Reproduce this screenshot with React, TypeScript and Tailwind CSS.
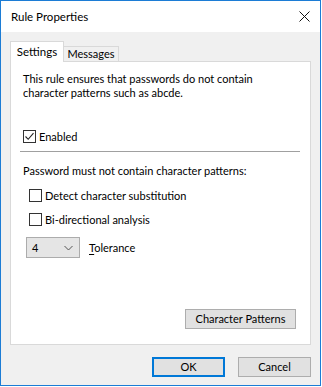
import React from "react";

function CheckBox({ checked }: { checked?: boolean }) {
  return (
    <div className="w-[13px] h-[13px] border border-[#333333] bg-white flex items-center justify-center shrink-0">
      {checked && (
        <svg width="11" height="11" viewBox="0 0 11 11">
          <path d="M1.5 5.5 L4.2 8.3 L9.5 2.2" fill="none" stroke="#222" strokeWidth="1.1" />
        </svg>
      )}
    </div>
  );
}

export default function App() {
  return (
    <div className="w-[322px] h-[387px] bg-white" style={{ fontFamily: "Lato, 'Liberation Sans', sans-serif" }}>
      <div className="w-[321px] h-[386px] border border-[#1c7cd5] bg-[#f0f0f0] flex flex-col text-[11px] leading-[14px] text-black">
        <div className="h-[31px] shrink-0 bg-white flex items-center justify-between pl-[10px] pr-[10px]">
          <span className="text-[11.5px]">Rule Properties</span>
          <svg width="11" height="11" viewBox="0 0 11 11">
            <path d="M0.5 0.5 L10.5 10.5 M10.5 0.5 L0.5 10.5" stroke="#111" strokeWidth="1" />
          </svg>
        </div>
        <div className="flex-1 flex flex-col px-[9px]">
          <div className="mt-[9px] h-[21px] flex items-end">
            <div className="relative z-10 h-[21px] w-[54px] border border-b-0 border-[#d9d9d9] bg-white flex items-center justify-center pb-[1px] text-[11.5px]">
              Settings
            </div>
            <div className="h-[16px] w-[55px] border border-l-0 border-[#d9d9d9] bg-[#f0f0f0] flex items-center justify-center text-[11px]">
              Messages
            </div>
          </div>
          <div className="-mt-[1px] h-[284px] border border-[#d9d9d9] bg-white flex flex-col pl-[12px]">
            <p className="pt-[10px]">
              This rule ensures that passwords do not contain
              <br />
              character patterns such as abcde.
            </p>
            <div className="mt-[30px] h-[13px] flex items-center">
              <CheckBox checked />
              <span className="ml-[3px]">Enabled</span>
            </div>
            <div className="mt-[8px] -ml-[3px] w-[280px] h-[1px] bg-[#a0a0a0]" />
            <div className="mt-[12px]">Password must not contain character patterns:</div>
            <div className="mt-[11px] ml-[6px] h-[13px] flex items-center">
              <CheckBox />
              <span className="ml-[3px]">Detect character substitution</span>
            </div>
            <div className="mt-[11px] ml-[6px] h-[13px] flex items-center">
              <CheckBox />
              <span className="ml-[3px]">Bi-directional analysis</span>
            </div>
            <div className="mt-[11px] ml-[3px] flex items-center">
              <div className="w-[54px] h-[21px] border border-[#acacac] bg-[#e5e5e5] flex items-center justify-between pl-[5px] pr-[6px]">
                <span>4</span>
                <svg width="9" height="6" viewBox="0 0 9 6">
                  <path d="M0.5 1 L4.5 5 L8.5 1" fill="none" stroke="#555" strokeWidth="1" />
                </svg>
              </div>
              <span className="ml-[9px]">
                <span className="underline underline-offset-2">T</span>olerance
              </span>
            </div>
            <button className="mt-auto self-end mr-[14px] mb-[15px] w-[111px] h-[20px] border border-[#adadad] bg-[#e1e1e1] flex items-center justify-center">
              Character Patterns
            </button>
          </div>
          <div className="mt-[12px] flex justify-end gap-[13px]">
            <button className="w-[73px] h-[20px] border-2 border-[#0078d7] bg-[#e1e1e1] flex items-center justify-center">
              OK
            </button>
            <button className="w-[73px] h-[20px] border border-[#adadad] bg-[#e1e1e1] flex items-center justify-center">
              Cancel
            </button>
          </div>
        </div>
      </div>
    </div>
  );
}
